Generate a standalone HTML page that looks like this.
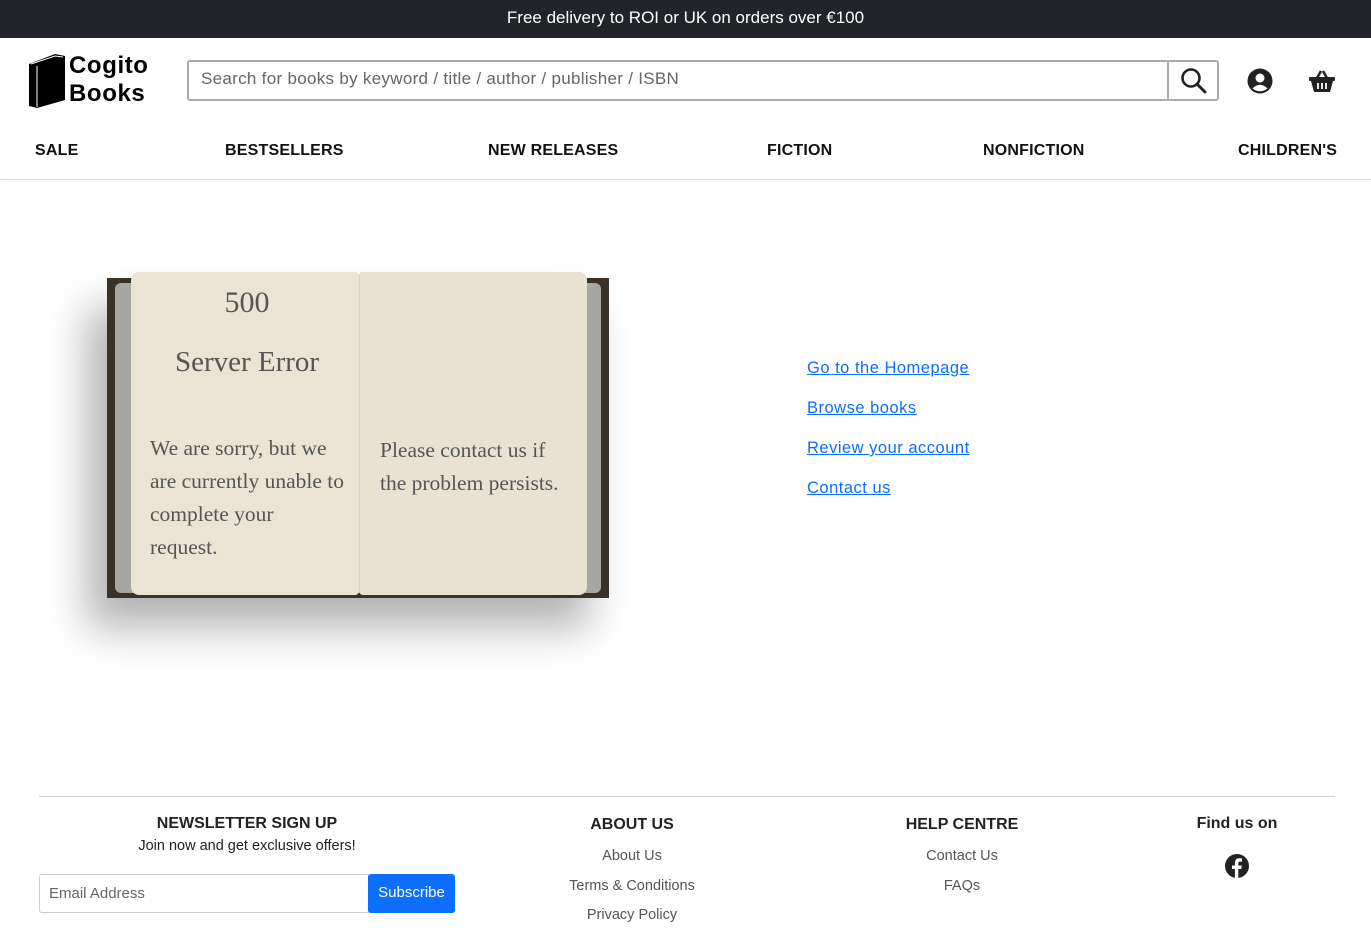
<!DOCTYPE html>
<html><head><meta charset="utf-8"><style>
*{box-sizing:border-box;margin:0;padding:0}
body{width:1371px;height:942px;overflow:hidden;background:#fff;font-family:"Liberation Sans",sans-serif;color:#222;position:relative}
.top{height:38px;background:#212529;color:#fff;text-align:center;font-size:17px;line-height:36px}
.abs{position:absolute}
.nav a{position:absolute;top:142px;font-size:16px;font-weight:bold;color:#111;letter-spacing:.2px}
.serif{font-family:"Liberation Serif",serif;color:#555}
.links a{position:absolute;left:807px;color:#0d6efd;font-size:16.5px;text-decoration:underline;letter-spacing:.5px}
.f{position:absolute;text-align:center;font-size:14.5px;color:#555}
.fh{font-size:16px;font-weight:bold;color:#222}
</style></head><body>
<div class="top">Free delivery to ROI or UK on orders over €100</div>
<svg class="abs" style="left:27px;top:52px" width="40" height="57" viewBox="0 0 40 57"><path d="M2 12 L28 2 L38 4 L38 48 L10 56 L2 54Z" fill="#000"/><path d="M4 12 L28 4 L36 5" stroke="#fff" stroke-width="1" fill="none"/><path d="M10 14 L10 55" stroke="#fff" stroke-width="1"/></svg>
<div class="abs" style="left:69px;top:52px;font-size:24px;font-weight:bold;line-height:28px;color:#000;letter-spacing:.6px">Cogito<br>Books</div>
<div class="abs" style="left:187px;top:60px;width:1032px;height:41px;border:2px solid #aaa;border-radius:3px"></div>
<div class="abs" style="left:201px;top:69px;font-size:17px;color:#666;letter-spacing:.3px">Search for books by keyword / title / author / publisher / ISBN</div>
<div class="abs" style="left:1167px;top:60px;width:2px;height:41px;background:#aaa"></div>
<svg class="abs" style="left:1180px;top:67px" width="27" height="27" viewBox="0 0 27 27"><circle cx="11" cy="11" r="8.5" stroke="#222" stroke-width="2.6" fill="none"/><path d="M17 17 L25 25" stroke="#222" stroke-width="3" stroke-linecap="round"/></svg>
<svg class="abs" style="left:1247px;top:68px" width="26" height="26" viewBox="0 0 26 26"><circle cx="13" cy="13" r="12.5" fill="#222"/><circle cx="13" cy="10" r="4.5" fill="#fff"/><path d="M5.5 20.5 Q13 13 20.5 20.5 Q13 26 5.5 20.5Z" fill="#fff"/></svg>
<svg class="abs" style="left:1309px;top:69px" width="26" height="24" viewBox="0 0 26 24"><path d="M8 9 L12 2 M18 9 L14 2" stroke="#222" stroke-width="2.5"/><rect x="0" y="8" width="26" height="4" rx="1" fill="#222"/><path d="M2 12 L24 12 L21 23 L5 23Z" fill="#222"/><path d="M9 14v6M13 14v6M17 14v6" stroke="#fff" stroke-width="1.8"/></svg>
<div class="nav"><a style="left:35px">SALE</a><a style="left:225px">BESTSELLERS</a><a style="left:488px">NEW RELEASES</a><a style="left:767px">FICTION</a><a style="left:983px">NONFICTION</a><a style="left:1238px">CHILDREN'S</a></div>
<div class="abs" style="left:0;top:179px;width:1371px;height:1px;background:#ddd;box-shadow:0 1px 3px rgba(0,0,0,.15)"></div>
<div class="abs" style="left:107px;top:278px;width:502px;height:320px;background:#3a3228;box-shadow:-20px 30px 40px rgba(0,0,0,.3)"></div>
<div class="abs" style="left:115px;top:283px;width:486px;height:310px;background:#a8a6a0;border-radius:6px"></div>
<div class="abs" style="left:131px;top:272px;width:228px;height:323px;background:#ebe3d3;border-radius:8px 4px 4px 8px"></div>
<div class="abs" style="left:359px;top:272px;width:228px;height:323px;background:#e9e2d3;border-radius:4px 8px 8px 4px;border-left:1px solid #d8cfbd"></div>
<div class="abs serif" style="left:131px;top:286px;width:232px;text-align:center;font-size:30px">500</div>
<div class="abs serif" style="left:131px;top:346px;width:232px;text-align:center;font-size:29px">Server Error</div>
<div class="abs serif" style="left:150px;top:432px;width:195px;font-size:21.5px;line-height:33px">We are sorry, but we are currently unable to complete your request.</div>
<div class="abs serif" style="left:380px;top:434px;width:196px;font-size:21.5px;line-height:33px">Please contact us if the problem persists.</div>
<div class="links"><a style="top:359px">Go to the Homepage</a><a style="top:399px">Browse books</a><a style="top:439px">Review your account</a><a style="top:479px">Contact us</a></div>
<div class="abs" style="left:39px;top:796px;width:1296px;height:1px;background:#ccc"></div>
<div class="f" style="left:39px;top:815px;width:416px"><div class="fh">NEWSLETTER SIGN UP</div><div style="color:#222;margin-top:5px">Join now and get exclusive offers!</div></div>
<div class="abs" style="left:39px;top:874px;width:330px;height:39px;border:1px solid #ccc;border-radius:3px 0 0 3px;font-size:15px;color:#666;padding:10px 9px">Email Address</div>
<div class="abs" style="left:368px;top:874px;width:87px;height:39px;background:#0d6efd;color:#fff;border-radius:3px;font-size:15px;text-align:center;line-height:38px">Subscribe</div>
<div class="f" style="left:532px;top:815px;width:200px;line-height:29.5px"><div class="fh" style="line-height:19px;margin-bottom:8px">ABOUT US</div>About Us<br>Terms &amp; Conditions<br>Privacy Policy</div>
<div class="f" style="left:862px;top:815px;width:200px;line-height:29.5px"><div class="fh" style="line-height:19px;margin-bottom:8px">HELP CENTRE</div>Contact Us<br>FAQs</div>
<div class="f" style="left:1177px;top:815px;width:120px"><div class="fh">Find us on</div></div>
<svg class="abs" style="left:1225px;top:854px" width="24" height="24" viewBox="0 0 24 24"><circle cx="12" cy="12" r="12" fill="#222"/><path d="M13.3 24V15h3l.5-3.5h-3.5V9.3c0-1 .3-1.7 1.8-1.7H17V4.5c-.3 0-1.4-.2-2.7-.2-2.7 0-4.4 1.6-4.4 4.6v2.6H7V15h2.9v9Z" fill="#fff"/></svg>
</body></html>
